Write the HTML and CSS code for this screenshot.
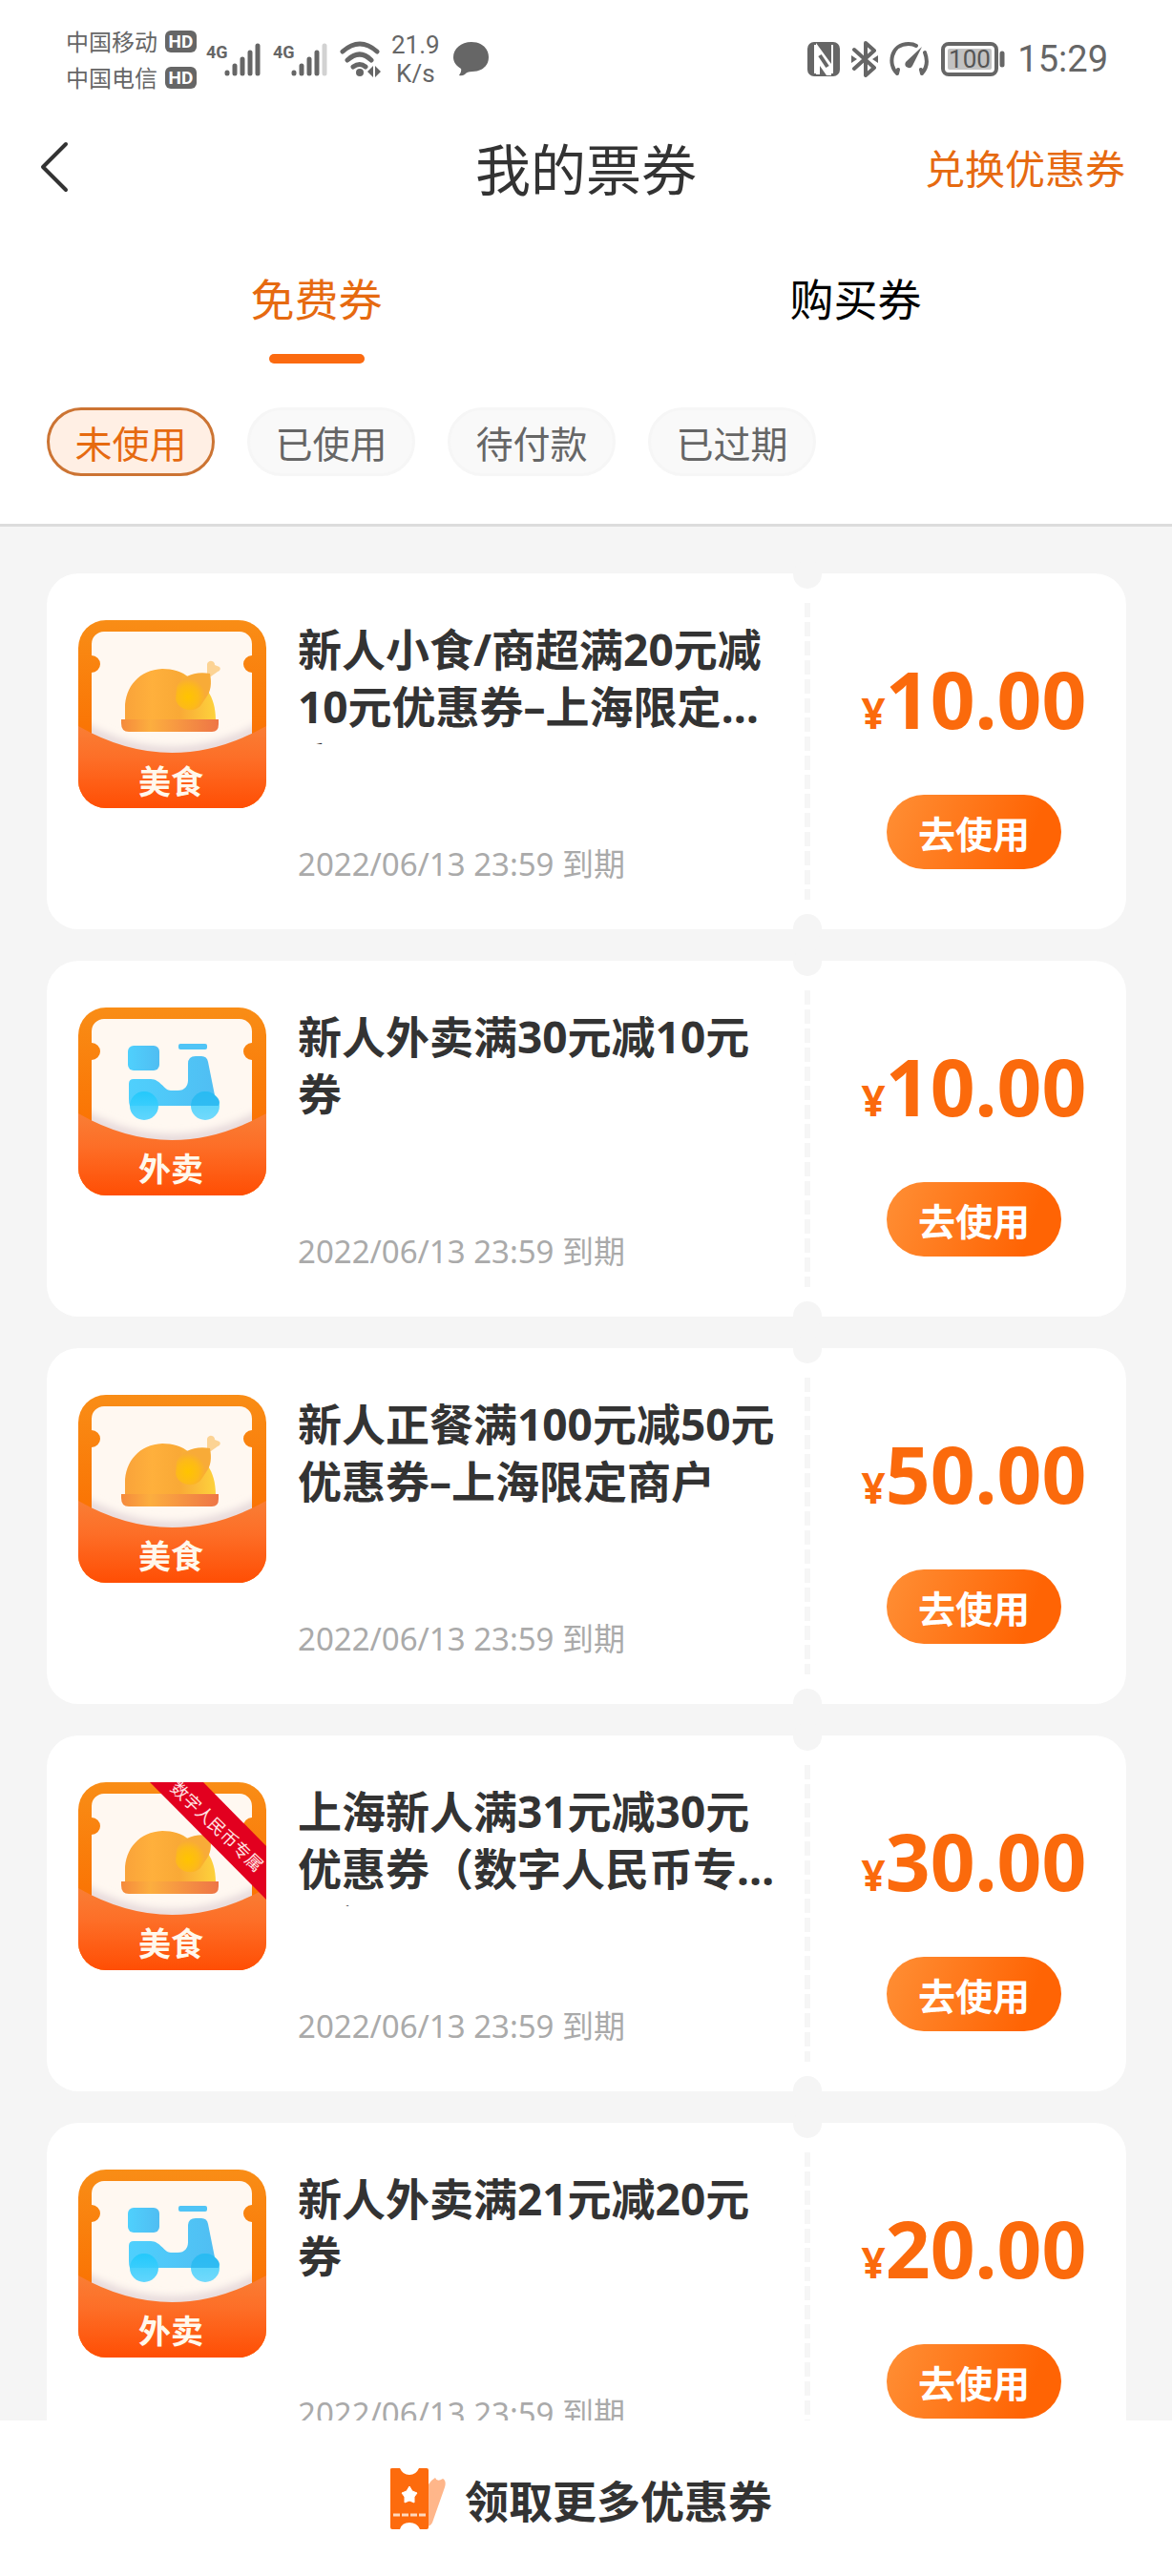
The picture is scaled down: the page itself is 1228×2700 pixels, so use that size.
FILE: index.html
```html
<!DOCTYPE html>
<html lang="zh-CN">
<head>
<meta charset="utf-8">
<meta name="viewport" content="width=device-width, initial-scale=1">
<title>我的票券</title>
<link rel="stylesheet" href="styles.css">
</head>
<body>

<!-- Shared artwork for the coupon badges -->
<svg class="sprite" width="0" height="0" aria-hidden="true">
  <defs>
    <linearGradient id="frame" x1="0" y1="0" x2="0" y2="1"><stop offset="0" stop-color="#f98d16"/><stop offset=".6" stop-color="#fa7404"/></linearGradient>
    <linearGradient id="pocket" x1="0" y1="0" x2="0" y2="1"><stop offset="0" stop-color="#f97e35"/><stop offset=".4" stop-color="#fd6e27"/><stop offset="1" stop-color="#ff4e04"/></linearGradient>
    <linearGradient id="dome" x1="0" y1="0" x2="1" y2="0"><stop offset="0" stop-color="#f9a33a"/><stop offset=".3" stop-color="#ffb03c"/><stop offset=".6" stop-color="#f9a936"/><stop offset="1" stop-color="#fdd23c"/></linearGradient>
    <radialGradient id="leg" cx=".35" cy=".65" r=".5"><stop offset="0" stop-color="#ffc400"/><stop offset=".6" stop-color="#fdba18"/><stop offset="1" stop-color="#f8ab38"/></radialGradient>
    <linearGradient id="plate" x1="0" y1="0" x2="1" y2="0"><stop offset="0" stop-color="#f58a3c"/><stop offset=".3" stop-color="#fcae3f"/><stop offset="1" stop-color="#ee7546"/></linearGradient>
    <linearGradient id="scooter" x1="0" y1="0" x2="1" y2="0"><stop offset="0" stop-color="#4fd0fd"/><stop offset="1" stop-color="#50bdf2"/></linearGradient>
    <linearGradient id="wheel" x1="0" y1="0" x2="0" y2="1"><stop offset="0" stop-color="#1fc8fb"/><stop offset="1" stop-color="#4fd2ff"/></linearGradient>
    <filter id="soft" x="-20%" y="-20%" width="140%" height="140%"><feGaussianBlur stdDeviation="4"/></filter>
    <clipPath id="badge-clip"><rect width="197" height="197" rx="29"/></clipPath>
    <clipPath id="cream-clip"><path d="M14 12H182V120Q98 160 14 120Z"/></clipPath>

    <symbol id="badge" viewBox="0 0 197 197">
      <rect width="197" height="197" rx="29" fill="url(#frame)"/>
      <path d="M27 12H169A13 13 0 0 1 182 25V37A9 9 0 0 0 182 55V160H14V55A9 9 0 0 0 14 37V25A13 13 0 0 1 27 12Z" fill="#fff8f1"/>
      <g clip-path="url(#cream-clip)"><path d="M0 110Q98 167 197 110" fill="none" stroke="#e3d6d8" stroke-width="10" filter="url(#soft)"/></g>
      <path d="M0 111Q98 167 197 111V168A29 29 0 0 1 168 197H29A29 29 0 0 1 0 168Z" fill="url(#pocket)"/>
    </symbol>
    <symbol id="food" viewBox="0 0 197 197">
      <path d="M49 104V92C49 70 64 52 88 51C99 51 109 54 116 60C132 64 144 80 144 104Z" fill="url(#dome)"/>
      <path d="M135 58L135 46A4 4 0 0 1 140 43A4 4 0 0 1 143 47L148 49A3 3 0 0 1 146 54L139 59Z" fill="#fcd394"/>
      <path d="M103 70C108 58 124 53 138 56C140 66 139 75 134 81L128 90C120 98 104 94 102 83Z" fill="url(#leg)"/>
      <path d="M45 104H147V109Q147 117 140 117H53Q45 117 45 108Z" fill="url(#plate)"/>
    </symbol>
    <symbol id="scoot" viewBox="0 0 197 197">
      <rect x="52" y="40" width="33" height="26" rx="6" fill="url(#scooter)"/>
      <rect x="105" y="38" width="30" height="6" rx="2" fill="#50c4f6"/>
      <path d="M53 80Q53 75 58 75H76C86 75 90 87 97 87H104C112 87 115 82 115 76V59Q115 51 123 51H129Q135 51 136 57L143 92C150 97 149 103 145 103H54Q53 100 53 96Z" fill="url(#scooter)"/>
      <circle cx="69" cy="103" r="15" fill="url(#wheel)" fill-opacity=".9"/>
      <circle cx="133" cy="103" r="15" fill="url(#wheel)" fill-opacity=".8"/>
      <path d="M119 97Q124 88 133 88T147 97V103H118Z" fill="#29b3ec" fill-opacity=".6"/>
    </symbol>
  </defs>
</svg>

<div class="app">
  <header class="top">
    <div class="status">
      <div class="status-side">
        <div class="carriers">
          <div class="carrier">中国移动<span class="hd">HD</span></div>
          <div class="carrier">中国电信<span class="hd">HD</span></div>
        </div>
        <svg class="signal" width="60" height="38" viewBox="0 0 60 38" aria-label="4G">
          <text x="0" y="18" class="net">4G</text>
          <g stroke="#666" stroke-width="5" stroke-linecap="round"><path d="M22 33V34M30 26V34M38 19V34M46 12V34M54 5V34"/></g>
        </svg>
        <svg class="signal" width="60" height="38" viewBox="0 0 60 38" aria-label="4G">
          <text x="0" y="18" class="net">4G</text>
          <g stroke="#666" stroke-width="5" stroke-linecap="round"><path d="M22 33V34M30 26V34M38 19V34M46 12V34"/><path d="M54 5V34" stroke="#d2d2d2"/></g>
        </svg>
        <svg width="44" height="38" viewBox="0 0 44 38" aria-label="Wi-Fi">
          <g fill="none" stroke="#666" stroke-width="5" stroke-linecap="round"><path d="M3 11Q21 -5 39 11M8 20Q21 8 33 20M14 27Q21 22 27 27"/></g>
          <circle cx="21" cy="33" r="4" fill="#666"/>
          <path d="M35 26V38L29 32ZM37 26V38L43 32Z" fill="#666"/>
        </svg>
        <div class="speed"><span>21.9</span><span>K/s</span></div>
        <svg width="38" height="36" viewBox="0 0 38 36" aria-label="消息">
          <path d="M19 0C30 0 37 7 37 16S30 31 20 31Q14 31 12 34Q9 36 6 35Q9 31 8 28C3 25 0 21 0 16C0 7 8 0 19 0Z" fill="#666"/>
        </svg>
      </div>
      <div class="status-side status-right">
        <svg width="34" height="36" viewBox="0 0 34 36" aria-label="NFC">
          <rect width="34" height="36" rx="7" fill="#666"/>
          <path d="M8 3V33M26 3V33" stroke="#fff" stroke-width="2"/>
          <path d="M9 1L25 23V35L20 35L13 25V34H9Z" fill="#fff"/>
          <path d="M13 14L21 26" stroke="#666" stroke-width="4"/>
        </svg>
        <svg width="28" height="38" viewBox="0 0 28 38" aria-label="蓝牙">
          <path d="M3 9L24 28L15 36V2L24 10L3 29" fill="none" stroke="#666" stroke-width="4" stroke-linejoin="round" stroke-linecap="round"/>
          <path d="M0 15L6 19L0 23ZM28 15L22 19L28 23Z" fill="#666"/>
        </svg>
        <svg width="42" height="38" viewBox="0 0 42 38" aria-label="性能模式">
          <path d="M8 34C-2 25 1 3 20 3Q25 3 28 5M37 12Q42 25 34 34M8 34L9 30M34 34L33 30" fill="none" stroke="#666" stroke-width="4" stroke-linecap="round"/>
          <path d="M34 6L24 26A4 4 0 0 1 17 22Z" fill="#666"/>
        </svg>
        <svg width="68" height="38" viewBox="0 0 68 38" aria-label="电量 100%">
          <rect x="2" y="3" width="56" height="32" rx="6" fill="#fff" stroke="#666" stroke-width="4"/>
          <rect x="7" y="8" width="46" height="22" rx="2" fill="#c2c2c2"/>
          <path d="M64 13V25" stroke="#666" stroke-width="5" stroke-linecap="round"/>
          <text x="30" y="28" text-anchor="middle" class="charge">100</text>
        </svg>
        <time class="clock">15:29</time>
      </div>
    </div>

    <div class="nav">
      <button class="back" type="button" aria-label="返回">
        <svg width="32" height="56" viewBox="0 0 32 56"><path d="M28 4L4 28L28 52" fill="none" stroke="#333" stroke-width="4" stroke-linecap="round" stroke-linejoin="round"/></svg>
      </button>
      <h1 class="title">我的票券</h1>
      <a class="redeem" href="#redeem">兑换优惠券</a>
    </div>

    <div class="tabs" role="tablist">
      <button class="tab tab-on" type="button" role="tab" aria-selected="true">免费券</button>
      <button class="tab" type="button" role="tab" aria-selected="false">购买券</button>
    </div>

    <div class="filters">
      <button class="chip chip-on" type="button">未使用</button>
      <button class="chip" type="button">已使用</button>
      <button class="chip" type="button">待付款</button>
      <button class="chip" type="button">已过期</button>
    </div>
  </header>

  <main class="list">
    <article class="coupon">
      <svg class="badge" viewBox="0 0 197 197"><use href="#badge"/><use href="#food"/><text x="97" y="182" class="kind">美食</text></svg>
      <div class="info">
        <h2 class="name">新人小食/商超满20元减10元优惠券–上海限定商户</h2>
        <p class="expiry">2022/06/13 23:59 到期</p>
      </div>
      <div class="tear"></div>
      <div class="offer">
        <p class="price"><span class="yen">¥</span>10.00</p>
        <button class="use" type="button">去使用</button>
      </div>
    </article>

    <article class="coupon">
      <svg class="badge" viewBox="0 0 197 197"><use href="#badge"/><use href="#scoot"/><text x="97" y="182" class="kind">外卖</text></svg>
      <div class="info">
        <h2 class="name">新人外卖满30元减10元券</h2>
        <p class="expiry">2022/06/13 23:59 到期</p>
      </div>
      <div class="tear"></div>
      <div class="offer">
        <p class="price"><span class="yen">¥</span>10.00</p>
        <button class="use" type="button">去使用</button>
      </div>
    </article>

    <article class="coupon">
      <svg class="badge" viewBox="0 0 197 197"><use href="#badge"/><use href="#food"/><text x="97" y="182" class="kind">美食</text></svg>
      <div class="info">
        <h2 class="name">新人正餐满100元减50元优惠券–上海限定商户</h2>
        <p class="expiry">2022/06/13 23:59 到期</p>
      </div>
      <div class="tear"></div>
      <div class="offer">
        <p class="price"><span class="yen">¥</span>50.00</p>
        <button class="use" type="button">去使用</button>
      </div>
    </article>

    <article class="coupon">
      <svg class="badge" viewBox="0 0 197 197"><use href="#badge"/><use href="#food"/><text x="97" y="182" class="kind">美食</text>
        <g clip-path="url(#badge-clip)"><path d="M75 0H131L197 67V123Z" fill="#e2001f"/><text class="ribbon" transform="translate(145 47) rotate(44)" y="6">数字人民币专属</text></g></svg>
      <div class="info">
        <h2 class="name">上海新人满31元减30元优惠券（数字人民币专属）</h2>
        <p class="expiry">2022/06/13 23:59 到期</p>
      </div>
      <div class="tear"></div>
      <div class="offer">
        <p class="price"><span class="yen">¥</span>30.00</p>
        <button class="use" type="button">去使用</button>
      </div>
    </article>

    <article class="coupon">
      <svg class="badge" viewBox="0 0 197 197"><use href="#badge"/><use href="#scoot"/><text x="97" y="182" class="kind">外卖</text></svg>
      <div class="info">
        <h2 class="name">新人外卖满21元减20元券</h2>
        <p class="expiry">2022/06/13 23:59 到期</p>
      </div>
      <div class="tear"></div>
      <div class="offer">
        <p class="price"><span class="yen">¥</span>20.00</p>
        <button class="use" type="button">去使用</button>
      </div>
    </article>
  </main>

  <footer class="more">
    <a class="more-link" href="#more">
      <svg width="58" height="66" viewBox="0 0 58 66" aria-hidden="true">
        <path d="M40 18Q42 14 47 11Q49 16 55 12Q59 14 57 21L44 58Q42 62 38 62Z" fill="#ffb68a"/>
        <path d="M0 2Q0 1 2 1H10Q13 8 20 8T30 1H38Q40 1 40 3V63Q40 65 38 65H31Q28 58 20 58T10 65H2Q0 65 0 63Z" fill="#fd6b0d"/>
        <path d="M20 20L23 25L28 27L25 31V37L20 35L15 37V31L12 27L17 25Z" fill="#fff" stroke="#fff" stroke-linejoin="round"/>
        <path d="M3 50H38" stroke="#ffd9bd" stroke-width="3" stroke-dasharray="7 2"/>
      </svg>
      <span>领取更多优惠券</span>
    </a>
  </footer>
</div>
</body>
</html>
```
FILE: styles.css
```css
* { box-sizing: border-box; }

body {
  margin: 0;
  background: #fff;
  color: #333;
  font-family: "Noto Sans CJK SC", sans-serif;
}

h1, h2, p { margin: 0; }

button {
  margin: 0;
  padding: 0;
  border: 0;
  background: none;
  color: inherit;
  font: inherit;
}

a { color: inherit; text-decoration: none; }

svg { display: block; flex: none; }

.sprite { position: absolute; }

.app {
  display: flex;
  flex-direction: column;
  height: 100vh;
}

.top {
  flex: none;
  padding: 0 49px 50px;
  border-bottom: 3px solid #dcdcdc;
}

/* Status bar */
.status {
  display: flex;
  justify-content: space-between;
  height: 124px;
  padding: 0 18px 0 20px;
  color: #666;
}

.status-side {
  display: flex;
  align-items: center;
  gap: 10px;
}

.status-right { gap: 12px; }

.carrier {
  display: flex;
  align-items: center;
  gap: 8px;
  font-size: 24px;
  line-height: 38px;
}

.hd {
  width: 33px;
  border-radius: 6px;
  background: #666;
  color: #fff;
  font: bold 19px/23px Roboto, sans-serif;
  text-align: center;
}

.net { fill: #666; font: bold 18px Roboto, sans-serif; }
.charge { fill: #555; font: 26px Roboto, sans-serif; }

.speed {
  display: flex;
  flex-direction: column;
  align-items: center;
  margin-right: 4px;
  font: 26px/30px Roboto, sans-serif;
}

.clock { font: 38px/44px Roboto, sans-serif; }

/* Title row */
.nav {
  display: grid;
  grid-template-columns: 1fr auto 1fr;
  align-items: center;
  height: 102px;
}

.back { justify-self: start; margin-left: -8px; }
.title { font-size: 58px; font-weight: 400; line-height: 80px; }
.redeem { justify-self: end; color: #e66a10; font-size: 42px; line-height: 60px; }

/* Free / purchased */
.tabs { display: flex; }

.tab {
  display: flex;
  flex: 1;
  flex-direction: column;
  align-items: center;
  gap: 30px;
  padding-top: 55px;
  color: #000;
  font-size: 46px;
  line-height: 60px;
}

.tab::after {
  content: "";
  width: 100px;
  height: 10px;
  border-radius: 5px;
}

.tab-on { color: #e66a10; }
.tab-on::after { background: #fb6a10; }

/* State filters */
.filters {
  display: flex;
  gap: 34px;
  margin-top: 46px;
}

.chip {
  width: 176px;
  height: 72px;
  border: 3px solid #f6f6f6;
  border-radius: 36px;
  background: #f9f9f9;
  color: #666;
  font-size: 39px;
  line-height: 64px;
}

.chip-on {
  border-color: #cc7433;
  background: #ffefe4;
  color: #e66a10;
}

/* Coupons */
.list {
  display: flex;
  flex: 1;
  flex-direction: column;
  gap: 33px;
  min-height: 0;
  padding: 49px 48px 33px 49px;
  overflow-y: auto;
  background: #f5f5f5;
  scrollbar-width: none;
}

.coupon {
  display: flex;
  flex: none;
  padding: 49px 0 49px 33px;
  border-radius: 33px;
  background: #fff;
}

.badge { width: 197px; height: 197px; }

.kind {
  fill: #fff8ec;
  font-size: 34px;
  font-weight: 700;
  text-anchor: middle;
}

.ribbon { fill: #ffe3e3; font-size: 18px; text-anchor: middle; }

.info {
  display: flex;
  flex: 1;
  flex-direction: column;
  justify-content: space-between;
  min-width: 0;
  min-height: 275px;
  padding: 0 10px 0 33px;
}

/* The vertical padding keeps glyphs clear of the clamp's clipping edge */
.name {
  display: -webkit-box;
  margin-top: -6px;
  padding: 6px 0 10px;
  overflow: hidden;
  font-family: "Noto Sans", "Noto Sans CJK SC", sans-serif;
  font-size: 46px;
  font-weight: 700;
  line-height: 60px;
  -webkit-box-orient: vertical;
  -webkit-line-clamp: 2;
}

.expiry {
  color: #aaa;
  font-family: "Noto Sans", "Noto Sans CJK SC", sans-serif;
  font-size: 33px;
  line-height: 38px;
}

.tear {
  position: relative;
  flex: none;
  width: 30px;
  margin: -18px 0;
  background: repeating-linear-gradient(#f6f6f6 0 15px, transparent 15px 20px) center / 6px 100% no-repeat;
}

.tear::before,
.tear::after {
  content: "";
  position: absolute;
  left: 0;
  width: 30px;
  height: 30px;
  border-radius: 50%;
  background: #f5f5f5;
}

.tear::before { top: -45px; }
.tear::after { bottom: -45px; }

.offer {
  display: flex;
  flex: none;
  flex-direction: column;
  align-items: center;
  justify-content: space-between;
  width: 319px;
  padding: 32px 0 14px;
}

.price {
  color: #fb6a0c;
  font: bold 82px/100px "Noto Sans", sans-serif;
}

.yen { font-size: 44px; }

.use {
  width: 183px;
  border-radius: 39px;
  background: linear-gradient(110deg, #ff8f35, #ff6404 80%);
  color: #fff;
  font-size: 39px;
  font-weight: 700;
  line-height: 78px;
}

/* Bottom bar */
.more {
  flex: none;
  padding: 48px 10px 47px 0;
  background: #fff;
}

.more-link {
  display: flex;
  align-items: center;
  justify-content: center;
  gap: 20px;
  font-size: 46px;
  font-weight: 700;
  line-height: 68px;
}
```
